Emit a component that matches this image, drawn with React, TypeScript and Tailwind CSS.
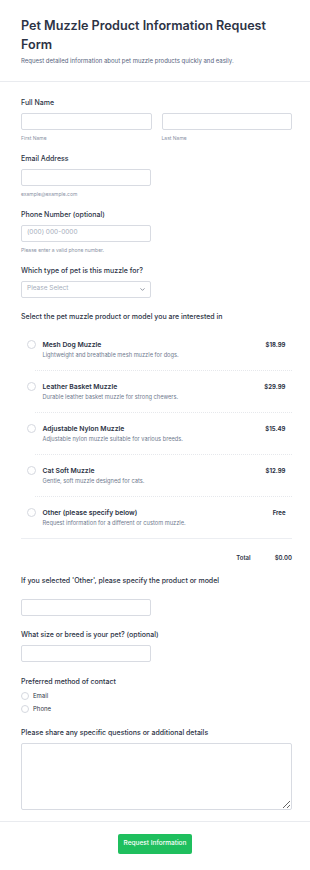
import React from 'react'
import { ChevronDown } from 'lucide-react'

interface Product {
  name: string
  desc: string
  price: string
}

const products: Product[] = [
  { name: 'Mesh Dog Muzzle', desc: 'Lightweight and breathable mesh muzzle for dogs.', price: '$18.99' },
  { name: 'Leather Basket Muzzle', desc: 'Durable leather basket muzzle for strong chewers.', price: '$29.99' },
  { name: 'Adjustable Nylon Muzzle', desc: 'Adjustable nylon muzzle suitable for various breeds.', price: '$15.49' },
  { name: 'Cat Soft Muzzle', desc: 'Gentle, soft muzzle designed for cats.', price: '$12.99' },
  { name: 'Other (please specify below)', desc: 'Request information for a different or custom muzzle.', price: 'Free' },
]

const labelCls = 'block text-[7px] leading-[10px] font-medium text-[#2c3345]'
const inputCls = 'block h-[17px] w-[130px] rounded-[2px] border border-[#d8dbe2] bg-white'
const subCls = 'text-[5px] leading-[7px] text-[#8b93a5]'

function Radio({ size = 'w-[9px] h-[9px]' }: { size?: string }) {
  return <span className={`${size} shrink-0 rounded-full border border-[#d5d8df] bg-white`} />
}

export default function App() {
  return (
    <div className="w-[310px] min-h-[870px] bg-white font-['Inter',sans-serif] text-[#2c3345]">
      {/* Header */}
      <div className="pt-[16px] pb-[16px] px-[21px] border-b border-[#e9ebef]">
        <h1 className="text-[12.6px] leading-[19px] font-semibold text-[#2c3345]">Pet Muzzle Product Information Request Form</h1>
        <p className="mt-[3px] text-[6px] leading-[8px] text-[#57647e]">Request detailed information about pet muzzle products quickly and easily.</p>
      </div>

      {/* Form body */}
      <div className="pt-[16px] pb-[11px] pl-[21px] pr-[18px] border-b border-[#e9ebef]">
        <div>
          <label className={labelCls}>Full Name</label>
          <div className="mt-[4.5px] grid grid-cols-2 gap-[10px]">
            <div>
              <div className="h-[17px] rounded-[2px] border border-[#d8dbe2]" />
              <div className={`mt-[5px] ${subCls}`}>First Name</div>
            </div>
            <div>
              <div className="h-[17px] rounded-[2px] border border-[#d8dbe2]" />
              <div className={`mt-[5px] ${subCls}`}>Last Name</div>
            </div>
          </div>
        </div>

        <div className="mt-[12.5px]">
          <label className={labelCls}>Email Address</label>
          <div className={`mt-[4.5px] ${inputCls}`} />
          <div className={`mt-[5px] ${subCls}`}>example@example.com</div>
        </div>

        <div className="mt-[12.5px]">
          <label className={labelCls}>Phone Number (optional)</label>
          <div className={`mt-[4.5px] ${inputCls} flex items-center px-[5px] text-[6.5px] text-[#a6adbb]`}>(000) 000-0000</div>
          <div className={`mt-[5px] ${subCls}`}>Please enter a valid phone number.</div>
        </div>

        <div className="mt-[12.5px]">
          <label className={labelCls}>Which type of pet is this muzzle for?</label>
          <div className={`mt-[4.5px] ${inputCls} flex items-center justify-between pl-[5px] pr-[4px] text-[6.5px] text-[#a6adbb]`}>
            <span>Please Select</span>
            <ChevronDown className="w-[7px] h-[7px] text-[#6b7280]" strokeWidth={2.5} />
          </div>
        </div>

        {/* Products */}
        <div className="mt-[14px]">
          <label className={labelCls}>Select the pet muzzle product or model you are interested in</label>
          <div className="mt-[7.5px]">
            {products.map((p, i) => (
              <div key={p.name}>
                <div className="flex items-start pl-[6px] pr-[6.5px] py-[11px]">
                  <div className="h-[9px] flex items-center">
                    <Radio />
                  </div>
                  <div className="ml-[6.5px] flex-1">
                    <div className="text-[6.8px] leading-[9px] font-semibold text-[#2c3345]">{p.name}</div>
                    <div className="mt-[1px] text-[5.7px] leading-[9px] text-[#6f7a8e]">{p.desc}</div>
                  </div>
                  <div className="text-[6px] leading-[9px] font-bold text-[#2c3345]">{p.price}</div>
                </div>
                {i < products.length - 1 ? (
                  <div className="ml-[14px] border-t border-dotted border-[#e6e8ec]" />
                ) : (
                  <div className="border-t border-[#eceef2]" />
                )}
              </div>
            ))}
          </div>
          <div className="flex justify-end items-center pt-[14px] text-[6px] leading-[9px] font-semibold text-[#2c3345]">
            <span>Total</span>
            <span className="ml-[24px]">$0.00</span>
          </div>
        </div>

        <div className="mt-[14px]">
          <label className={labelCls}>If you selected 'Other', please specify the product or model</label>
          <div className={`mt-[13px] ${inputCls}`} />
        </div>

        <div className="mt-[14px]">
          <label className={labelCls}>What size or breed is your pet? (optional)</label>
          <div className={`mt-[5px] ${inputCls}`} />
        </div>

        <div className="mt-[14.5px]">
          <label className={labelCls}>Preferred method of contact</label>
          <div className="mt-[2.5px]">
            {['Email', 'Phone'].map((m) => (
              <div key={m} className="flex items-center h-[13px]">
                <Radio size="w-[8px] h-[8px]" />
                <span className="ml-[4px] text-[6px] text-[#2c3345]">{m}</span>
              </div>
            ))}
          </div>
        </div>

        <div className="mt-[13px]">
          <label className={labelCls}>Please share any specific questions or additional details</label>
          <textarea className="mt-[4.5px] block w-full h-[67.5px] rounded-[2px] border border-[#d8dbe2] outline-none" />
        </div>
      </div>

      {/* Footer */}
      <div className="flex justify-center pt-[12px] pb-[17px]">
        <button className="h-[19.5px] px-[5.5px] rounded-[2px] bg-[#1fbf5e] text-[6.5px] font-medium text-white">Request Information</button>
      </div>
    </div>
  )
}
